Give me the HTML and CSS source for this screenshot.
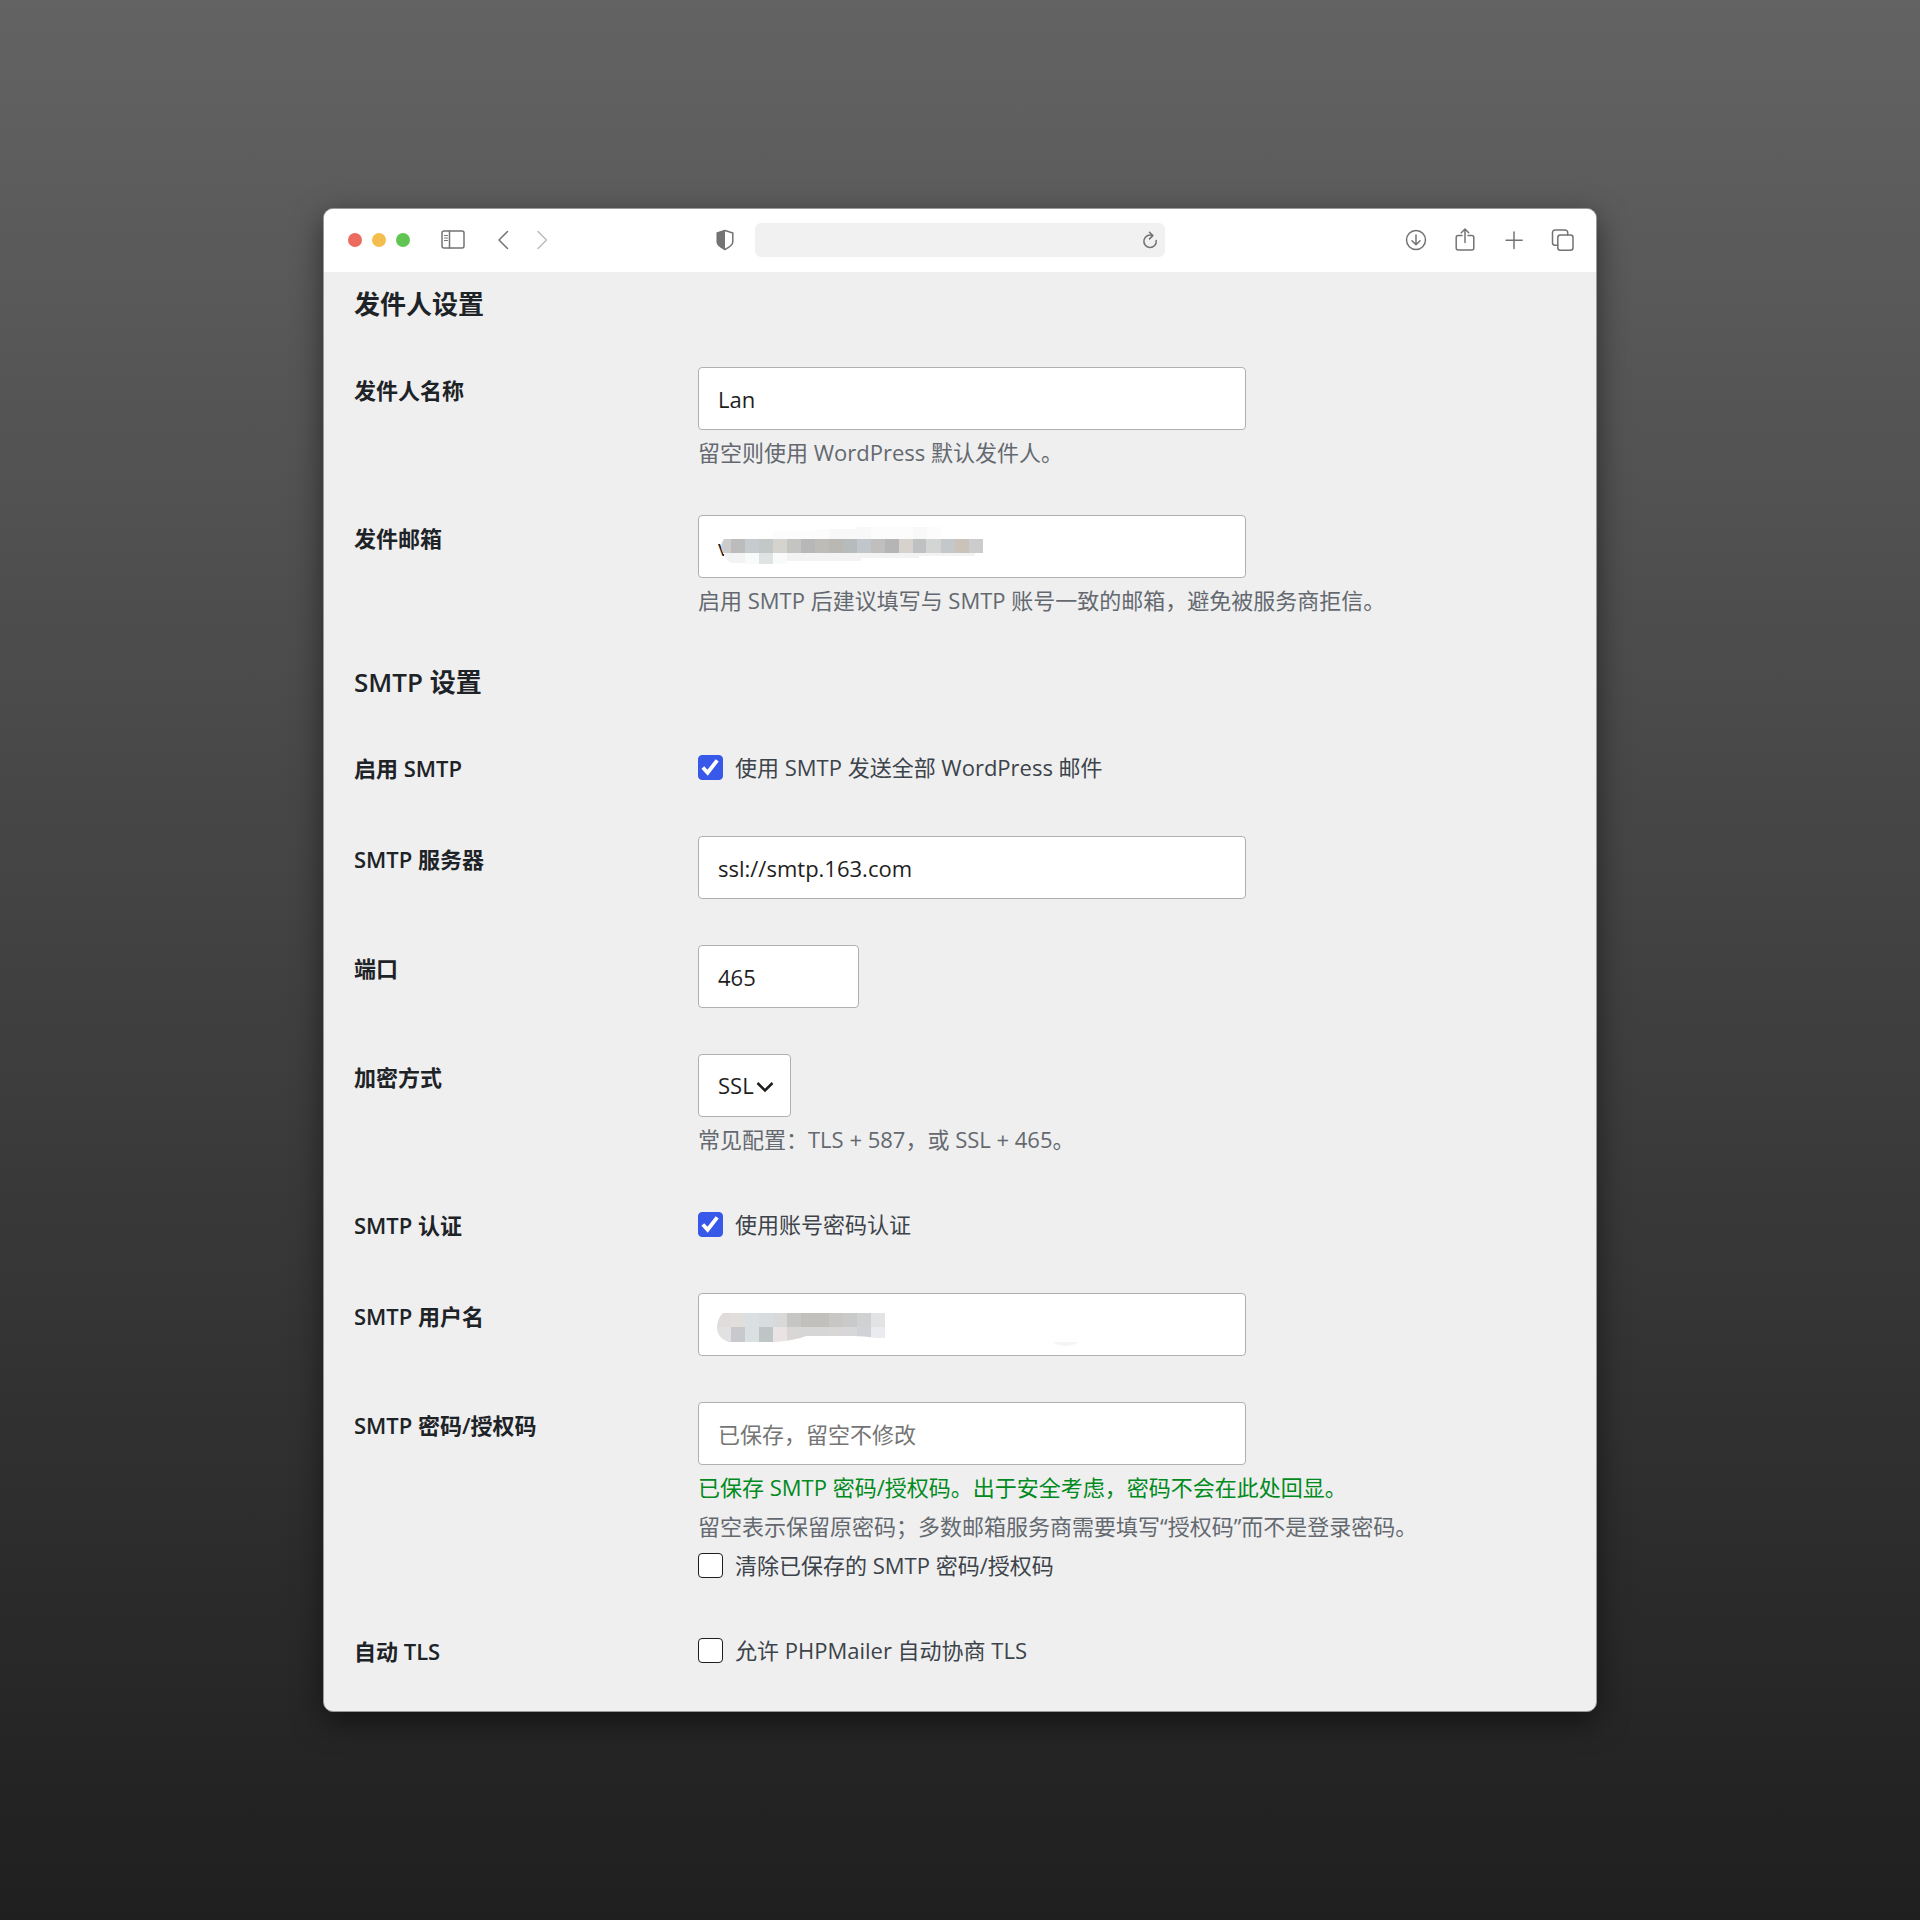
FILE: index.html
```html
<!DOCTYPE html>
<html lang="zh-CN">
<head>
    <meta charset="UTF-8">
    <meta name="viewport" content="width=device-width, initial-scale=1.0">
    <title>SMTP 设置</title>
    <link rel="stylesheet" href="styles.css">
</head>
<body>
    <div class="window">
        <header class="toolbar">
            <div class="toolbar-left">
                <div class="lights">
                    <button type="button" class="light red" aria-label="关闭"></button>
                    <button type="button" class="light yellow" aria-label="最小化"></button>
                    <button type="button" class="light green" aria-label="缩放"></button>
                </div>
                <button type="button" class="icon sidebar" aria-label="边栏">
                    <svg viewBox="0 0 24 24"><rect x="1" y="3" width="22" height="17" rx="2"/><path d="M8.500 3v17"/><path class="thin" d="M3.500 7.500h3M3.500 10h3M3.500 12.500h3"/></svg>
                </button>
                <div class="history">
                    <button type="button" class="icon" aria-label="后退">
                        <svg viewBox="0 0 24 24"><path d="M16.500 3.500L8 12l8.500 8.500"/></svg>
                    </button>
                    <button type="button" class="icon faded" aria-label="前进">
                        <svg viewBox="0 0 24 24"><path d="M8 3.500l8.500 8.500L8 20.500"/></svg>
                    </button>
                </div>
                <button type="button" class="icon shield" aria-label="隐私报告">
                    <svg viewBox="0 0 24 24"><path d="M12 2.500L4.200 5v9c0 3 3.500 5.200 7.800 7.500 4.300-2.300 7.800-4.500 7.800-7.500V5z"/><path class="solid" d="M12 2L4 5v9c0 3 3.500 5.500 8 8z"/></svg>
                </button>
            </div>
            <div class="address">
                <input type="text" class="address-input" aria-label="地址">
                <button type="button" class="icon reload" aria-label="重新载入">
                    <svg viewBox="0 0 18 18"><path d="M11.500 4.600A6.200 6.200 0 1 0 15.200 9.500"/><path d="M8.500 1.200l3.300 3.400-3.300 3.300"/></svg>
                </button>
            </div>
            <div class="toolbar-right">
                <button type="button" class="icon" aria-label="下载">
                    <svg viewBox="0 0 24 24"><circle cx="12" cy="12" r="9.500"/><path d="M12 7v9.500M8 12.700l4 4 4-4"/></svg>
                </button>
                <button type="button" class="icon" aria-label="共享">
                    <svg viewBox="0 0 24 24"><path d="M9 7.500H5.200a2 2 0 0 0-2 2v10.500a2 2 0 0 0 2 2h13.600a2 2 0 0 0 2-2V9.500a2 2 0 0 0-2-2H15"/><path d="M12 14.500V1M8.300 4.700L12 1l3.700 3.700"/></svg>
                </button>
                <button type="button" class="icon" aria-label="新建标签页">
                    <svg viewBox="0 0 24 24"><path d="M12 4v16.500M4 12.200h16.200"/></svg>
                </button>
                <button type="button" class="icon" aria-label="标签页概览">
                    <svg viewBox="0 0 24 24"><rect x="6.800" y="7" width="15.200" height="15.200" rx="2.500"/><path d="M6.800 17.200H4a2.500 2.500 0 0 1-2.500-2.500V4.500A2.500 2.500 0 0 1 4 2h10.200a2.500 2.500 0 0 1 2.500 2.500V7"/></svg>
                </button>
            </div>
        </header>

        <main class="content">
            <form>
                <h2>发件人设置</h2>
                <table class="form-table">
                    <tr>
                        <th scope="row"><label for="from-name">发件人名称</label></th>
                        <td>
                            <input type="text" class="field" id="from-name" value="Lan">
                            <p class="description">留空则使用 WordPress 默认发件人。</p>
                        </td>
                    </tr>
                    <tr>
                        <th scope="row"><label for="from-email">发件邮箱</label></th>
                        <td>
                            <div class="masked">
                                <input type="text" class="field" id="from-email" value="v">
                                <svg class="mosaic" width="548" height="63" viewBox="0 0 548 63" shape-rendering="crispEdges" aria-hidden="true">
                                    <path fill="#fcfcfc" d="M75 16h42v-2h42v-2h84v12H75z"/>
                                    <path fill="#f8f8f8" d="M131 14h28v10h-28zM159 12h14v12h-14zM215 12h14v12h-14z"/>
                                    <path fill="#f3f3f3" d="M25 38h252v3h-56v2h-58v3h-74v2H33q-6-3-8-10z"/>
                                    <path fill="#f9fbfa" d="M47 38h14v11H47zM75 38h14v11H75z"/>
                                    <path fill="#dfe3e3" d="M61 38h14v11H61z"/>
                                    <path fill="#cccccc" shape-rendering="auto" d="M33 24h-7q-5 7-1 14h8z"/>
                                    <path fill="#bcbcbc" d="M33 24h14v14H33z"/>
                                    <path fill="#c6cbcf" d="M47 24h14v14H47z"/>
                                    <path fill="#c2c8c8" d="M61 24h14v14H61z"/>
                                    <path fill="#d4d3ce" d="M75 24h14v14H75z"/>
                                    <path fill="#c4c4c2" d="M89 24h14v14H89z"/>
                                    <path fill="#b7b7b7" d="M103 24h14v14h-14z"/>
                                    <path fill="#bdbcb8" d="M117 24h14v14h-14z"/>
                                    <path fill="#bab8b2" d="M131 24h14v14h-14z"/>
                                    <path fill="#b6bbbb" d="M145 24h14v14h-14z"/>
                                    <path fill="#c1c5cc" d="M159 24h14v14h-14z"/>
                                    <path fill="#c0bfbd" d="M173 24h14v14h-14z"/>
                                    <path fill="#b5b5b5" d="M187 24h14v14h-14z"/>
                                    <path fill="#d8d2cf" d="M201 24h14v14h-14z"/>
                                    <path fill="#bec0c2" d="M215 24h13v14h-13z"/>
                                    <path fill="#d3d5d5" d="M228 24h15v14h-15z"/>
                                    <path fill="#c5c8ca" d="M243 24h14v14h-14z"/>
                                    <path fill="#cbc2ba" d="M257 24h14v14h-14z"/>
                                    <path fill="#cccccc" d="M271 24h14v14h-14z"/>
                                </svg>
                            </div>
                            <p class="description">启用 SMTP 后建议填写与 SMTP 账号一致的邮箱，避免被服务商拒信。</p>
                        </td>
                    </tr>
                </table>

                <h2>SMTP 设置</h2>
                <table class="form-table">
                    <tr>
                        <th scope="row">启用 SMTP</th>
                        <td>
                            <label class="check"><input type="checkbox" checked>使用 SMTP 发送全部 WordPress 邮件</label>
                        </td>
                    </tr>
                    <tr>
                        <th scope="row"><label for="host">SMTP 服务器</label></th>
                        <td><input type="text" class="field" id="host" value="ssl://smtp.163.com"></td>
                    </tr>
                    <tr>
                        <th scope="row"><label for="port">端口</label></th>
                        <td><input type="number" class="field small" id="port" value="465"></td>
                    </tr>
                    <tr>
                        <th scope="row"><label for="secure">加密方式</label></th>
                        <td>
                            <div class="select">
                                <select class="field" id="secure">
                                    <option>TLS</option>
                                    <option selected>SSL</option>
                                </select>
                                <svg class="arrow" viewBox="0 0 18 12" aria-hidden="true"><path d="M1.500 2L9 9.500 16.500 2"/></svg>
                            </div>
                            <p class="description">常见配置：TLS + 587，或 SSL + 465。</p>
                        </td>
                    </tr>
                    <tr>
                        <th scope="row">SMTP 认证</th>
                        <td>
                            <label class="check"><input type="checkbox" checked>使用账号密码认证</label>
                        </td>
                    </tr>
                    <tr>
                        <th scope="row"><label for="user">SMTP 用户名</label></th>
                        <td>
                            <div class="masked">
                                <input type="text" class="field" id="user">
                                <svg class="mosaic" width="548" height="63" viewBox="0 0 548 63" aria-hidden="true">
                                    <clipPath id="smear"><path d="M25 20H187V45H178Q166 43 156 43H108Q98 47 78 49H30Q18 44 19 33Q20 25 25 20z"/></clipPath>
                                    <g clip-path="url(#smear)" shape-rendering="crispEdges">
                                        <path fill="#e0dcdb" d="M19 20h14v14H19z"/>
                                        <path fill="#e0dfdc" d="M33 20h14v14H33z"/>
                                        <path fill="#dadfe2" d="M47 20h14v29H47z"/>
                                        <path fill="#d8dcde" d="M61 20h14v14H61z"/>
                                        <path fill="#d9d9da" d="M75 20h14v14H75z"/>
                                        <path fill="#c6c6c4" d="M89 20h14v14H89z"/>
                                        <path fill="#c1c0bd" d="M103 20h28v14h-28z"/>
                                        <path fill="#c8c7c5" d="M131 20h14v14h-14z"/>
                                        <path fill="#cacaca" d="M145 20h14v14h-14z"/>
                                        <path fill="#d0d1d3" d="M159 20h14v14h-14z"/>
                                        <path fill="#e2e4e3" d="M173 20h14v14h-14z"/>
                                        <path fill="#e1e1e1" d="M19 34h14v15H19z"/>
                                        <path fill="#c7c9cc" d="M33 34h14v15H33z"/>
                                        <path fill="#bec5c5" d="M61 34h14v15H61z"/>
                                        <path fill="#e9e4e3" d="M75 34h14v15H75z"/>
                                        <path fill="#d9d7d5" d="M89 34h14v15H89z"/>
                                        <path fill="#d6d6d7" d="M103 34h28v15h-28z"/>
                                        <path fill="#d9d7d5" d="M131 34h14v15h-14z"/>
                                        <path fill="#d7d7d9" d="M145 34h14v15h-14z"/>
                                        <path fill="#d0d2d8" d="M159 34h14v15h-14z"/>
                                        <path fill="#e9ebee" d="M173 34h14v15h-14z"/>
                                    </g>
                                    <path fill="#f5f5f5" d="M354 49h27q-13 8-27 0z"/>
                                </svg>
                            </div>
                        </td>
                    </tr>
                    <tr>
                        <th scope="row"><label for="password">SMTP 密码/授权码</label></th>
                        <td>
                            <input type="password" class="field" id="password" placeholder="已保存，留空不修改">
                            <p class="description saved">已保存 SMTP 密码/授权码。出于安全考虑，密码不会在此处回显。</p>
                            <p class="description">留空表示保留原密码；多数邮箱服务商需要填写“授权码”而不是登录密码。</p>
                            <label class="check stacked"><input type="checkbox">清除已保存的 SMTP 密码/授权码</label>
                        </td>
                    </tr>
                    <tr>
                        <th scope="row">自动 TLS</th>
                        <td>
                            <label class="check"><input type="checkbox">允许 PHPMailer 自动协商 TLS</label>
                        </td>
                    </tr>
                </table>
            </form>
        </main>
    </div>
</body>
</html>
```

FILE: styles.css
```css
* {
    box-sizing: border-box;
}

body {
    margin: 0;
    min-height: 100vh;
    padding: 208px 32px;
    background: linear-gradient(#636363, #1f1f1f);
    font-family: "Open Sans", "Noto Sans CJK SC", sans-serif;
    font-size: 22px;
    line-height: 33px;
    color: #3c434a;
}

.window {
    max-width: 1274px;
    margin: 0 auto;
    border: 1px solid #999;
    border-radius: 10px;
    background-color: #efefef;
    box-shadow: 0 10px 30px rgba(0, 0, 0, 0.5);
    overflow: hidden;
}

/* toolbar */

.toolbar {
    display: grid;
    grid-template-columns: 1fr minmax(0, 410px) 1fr;
    align-items: center;
    height: 63px;
    padding: 0 21px 2px;
    background-color: #fff;
}

.toolbar-left,
.toolbar-right,
.lights,
.history {
    display: flex;
    align-items: center;
}

.toolbar-right {
    justify-content: flex-end;
    gap: 25px;
}

.lights {
    gap: 10px;
    margin-left: 3px;
}

.light {
    width: 14px;
    height: 14px;
    padding: 0;
    border: none;
    border-radius: 50%;
}

.red {
    background-color: #ec6a5e;
}

.yellow {
    background-color: #f4be4f;
}

.green {
    background-color: #61c554;
}

.icon {
    display: block;
    width: 24px;
    height: 24px;
    padding: 0;
    border: none;
    background: none;
    color: #737373;
    cursor: pointer;
}

.icon svg {
    display: block;
    width: 100%;
    height: 100%;
    fill: none;
    stroke: currentColor;
    stroke-width: 1.5;
    stroke-linecap: round;
    stroke-linejoin: round;
}

.icon .thin {
    stroke-width: 1;
}

.icon .solid {
    fill: currentColor;
    stroke: none;
}

.faded {
    color: #bbb;
}

.sidebar {
    margin-left: 31px;
}

.history {
    gap: 15px;
    margin-left: 26px;
}

.shield {
    margin-left: auto;
    margin-right: 18px;
}

.address {
    display: flex;
    align-items: center;
    height: 34px;
    padding-right: 6px;
    border-radius: 6px;
    background-color: #f1f1f1;
}

.address-input {
    flex: 1;
    min-width: 0;
    height: 34px;
    padding: 0 12px;
    border: none;
    background: none;
    font: inherit;
    font-size: 16px;
}

.reload {
    width: 18px;
    height: 18px;
}

/* settings */

.content {
    padding: 14px 30px 15px;
}

h2 {
    margin: 0 0 22px;
    font-size: 26px;
    font-weight: 600;
    line-height: 36px;
    color: #1d2327;
}

.form-table + h2 {
    margin-top: 24px;
}

.form-table {
    width: 100%;
    border-collapse: collapse;
}

.form-table th {
    width: 344px;
    padding: 32px 12px 30px 0;
    font-weight: 600;
    line-height: 29px;
    text-align: left;
    vertical-align: top;
    color: #1d2327;
}

.form-table td {
    padding: 23px 0;
    vertical-align: middle;
}

.field {
    display: block;
    width: 548px;
    max-width: 100%;
    height: 63px;
    padding: 0 19px;
    border: 1px solid #b0b0b0;
    border-radius: 4px;
    background-color: #fff;
    font: inherit;
    color: #1e1e1e;
}

.field::placeholder {
    color: #757575;
    opacity: 1;
}

.small {
    width: 161px;
    appearance: textfield;
}

.masked {
    position: relative;
}

.mosaic {
    position: absolute;
    top: 0;
    left: 0;
    pointer-events: none;
}

.select {
    position: relative;
    width: 93px;
}

.select .field {
    width: 100%;
    appearance: none;
}

.arrow {
    position: absolute;
    top: 27px;
    right: 17px;
    width: 18px;
    height: 12px;
    fill: none;
    stroke: #1e1e1e;
    stroke-width: 2.5;
    pointer-events: none;
}

.description {
    margin: 6px 0 0;
    color: #646970;
}

.saved {
    color: #008a20;
}

.check {
    display: flex;
    align-items: center;
    gap: 12px;
}

.stacked {
    margin-top: 6px;
}

.check input {
    flex: none;
    width: 25px;
    height: 25px;
    margin: 0;
    border: 1px solid #1e1e1e;
    border-radius: 4px;
    background-color: #fff;
    appearance: none;
}

.check input:checked {
    border-color: #3858e9;
    background: #3858e9 url("data:image/svg+xml,%3Csvg xmlns='http://www.w3.org/2000/svg' viewBox='0 0 24 24'%3E%3Cpath d='M4 12l5 5.500L19 4.500' fill='none' stroke='%23fff' stroke-width='4'/%3E%3C/svg%3E") center / 23px no-repeat;
}
```
